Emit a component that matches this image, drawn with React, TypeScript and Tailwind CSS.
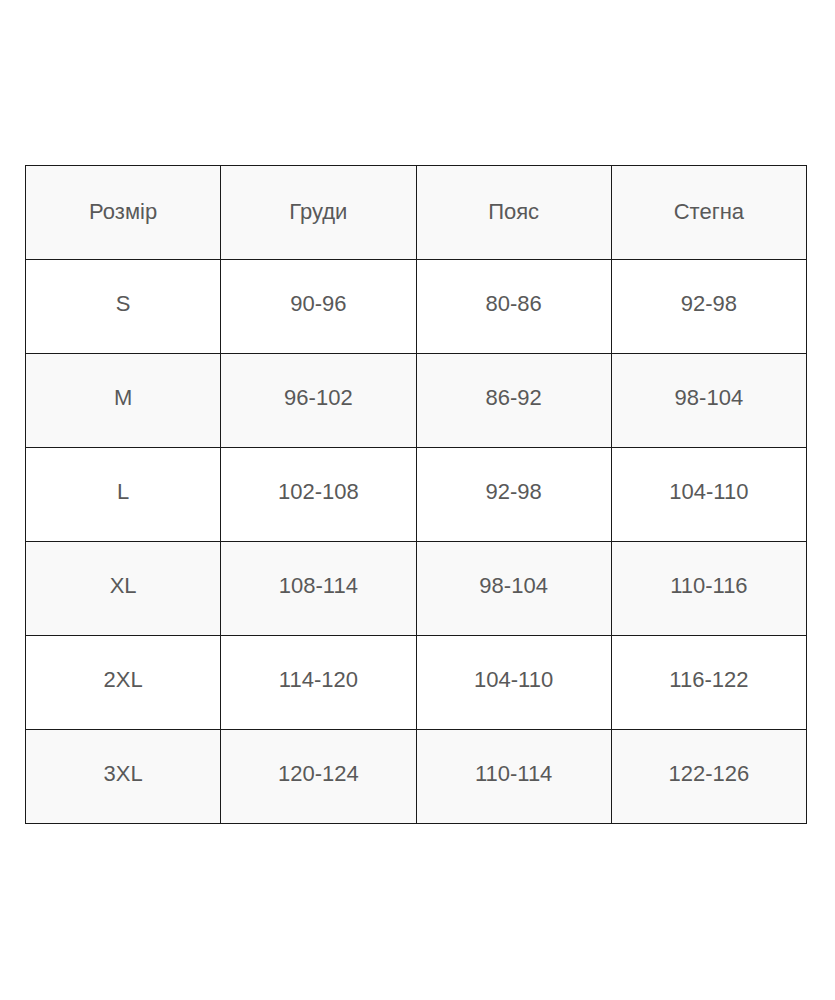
const header = ["Розмір", "Груди", "Пояс", "Стегна"];

const rows = [
  ["S", "90-96", "80-86", "92-98"],
  ["M", "96-102", "86-92", "98-104"],
  ["L", "102-108", "92-98", "104-110"],
  ["XL", "108-114", "98-104", "110-116"],
  ["2XL", "114-120", "104-110", "116-122"],
  ["3XL", "120-124", "110-114", "122-126"],
];

export default function App() {
  return (
    <div className="min-h-[1000px] bg-white pt-[165px] font-['Liberation_Sans',Arial,sans-serif]">
      <table className="ml-[25px] w-[782px] table-fixed border-collapse text-[22px] text-[#595959]">
        <thead>
          <tr className="h-[94px] bg-[#f9f9f9]">
            {header.map((h) => (
              <th key={h} className="border border-[#1a1a1a] pb-[2px] text-center font-normal">
                {h}
              </th>
            ))}
          </tr>
        </thead>
        <tbody>
          {rows.map((r, i) => (
            <tr key={r[0]} className={i % 2 === 0 ? "h-[94px] bg-white" : "h-[94px] bg-[#f9f9f9]"}>
              {r.map((c, j) => (
                <td key={j} className="border border-[#1a1a1a] pb-[6px] text-center">
                  {c}
                </td>
              ))}
            </tr>
          ))}
        </tbody>
      </table>
    </div>
  );
}
